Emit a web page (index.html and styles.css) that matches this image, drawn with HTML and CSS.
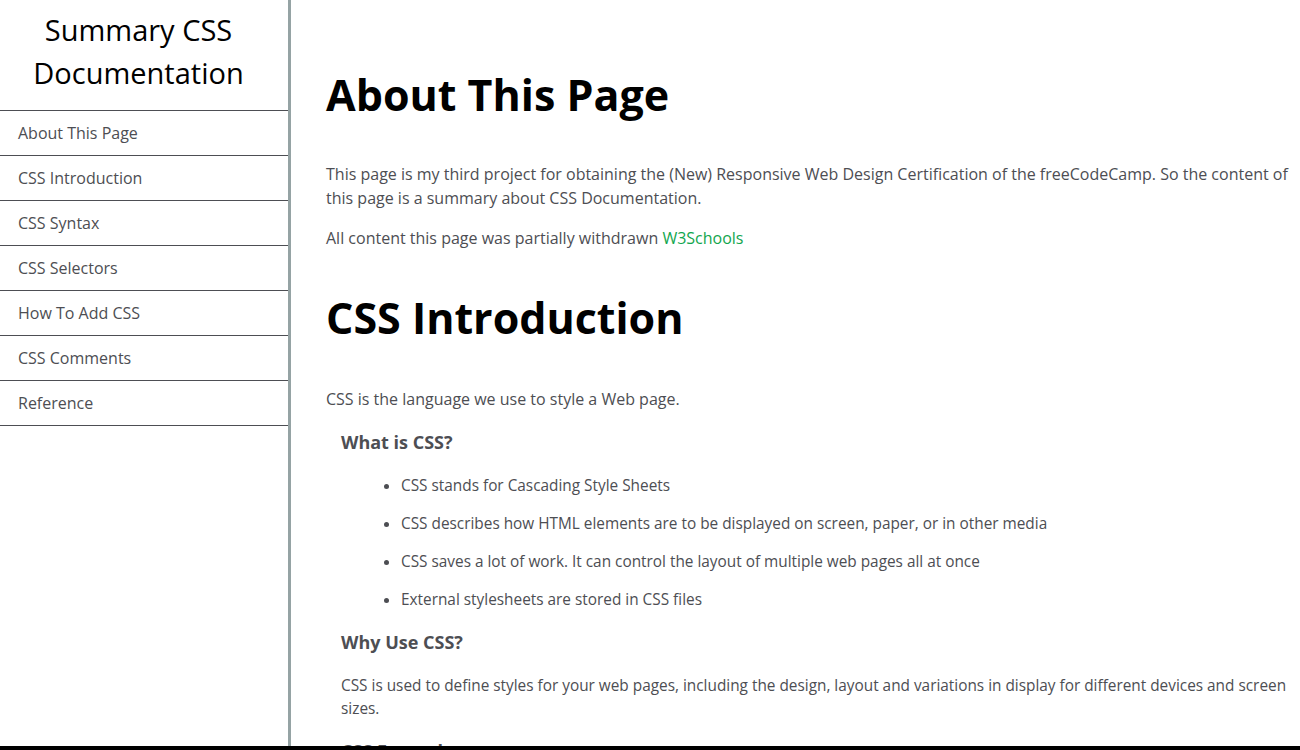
FILE: index.html
```html
<!DOCTYPE html>
<html lang="en">
<head>
<meta charset="utf-8">
<title>Summary CSS Documentation</title>
<link rel="stylesheet" href="styles.css">
</head>
<body>
<nav id="navbar" class="navbar">
  <header class="nav-title">Summary CSS Documentation</header>
  <ul class="nav-list">
    <li><a class="nav-link" href="#About_This_Page">About This Page</a></li>
    <li><a class="nav-link" href="#CSS_Introduction">CSS Introduction</a></li>
    <li><a class="nav-link" href="#CSS_Syntax">CSS Syntax</a></li>
    <li><a class="nav-link" href="#CSS_Selectors">CSS Selectors</a></li>
    <li><a class="nav-link" href="#How_To_Add_CSS">How To Add CSS</a></li>
    <li><a class="nav-link" href="#CSS_Comments">CSS Comments</a></li>
    <li><a class="nav-link" href="#Reference">Reference</a></li>
  </ul>
</nav>
<main id="main-doc" class="main-doc">
  <section class="main-section" id="About_This_Page">
    <header class="section-title">About This Page</header>
    <p class="text">This page is my third project for obtaining the (New) Responsive Web Design Certification of the freeCodeCamp. So the content of this page is a summary about CSS Documentation.</p>
    <p class="text">All content this page was partially withdrawn <a class="green-link" href="#">W3Schools</a></p>
  </section>
  <section class="main-section" id="CSS_Introduction">
    <header class="section-title">CSS Introduction</header>
    <p class="text intro">CSS is the language we use to style a Web page.</p>
    <article class="sub">
      <h3 class="sub-title">What is CSS?</h3>
      <ul class="bullets">
        <li>CSS stands for Cascading Style Sheets</li>
        <li>CSS describes how HTML elements are to be displayed on screen, paper, or in other media</li>
        <li>CSS saves a lot of work. It can control the layout of multiple web pages all at once</li>
        <li>External stylesheets are stored in CSS files</li>
      </ul>
      <h3 class="sub-title">Why Use CSS?</h3>
      <p class="sub-text">CSS is used to define styles for your web pages, including the design, layout and variations in display for different devices and screen sizes.</p>
      <h3 class="sub-title">CSS Example</h3>
      <p class="sub-text">body { background-color: lightblue; }</p>
    </article>
  </section>
</main>
<div class="bottom-bar"></div>
</body>
</html>
```
FILE: styles.css
```css
html, body {
  margin: 0;
  padding: 0;
  background: #fff;
}
body {
  font-family: "Open Sans", "Liberation Sans", sans-serif;
  color: #4d4e53;
  overflow: hidden;
  height: 750px;
}
.navbar {
  position: fixed;
  top: 0;
  left: 0;
  width: 288px;
  height: 100%;
  border-right: 3px solid #95a3a4;
  background: #fff;
  z-index: 2;
}
.nav-title {
  color: #000;
  font-size: 29px;
  line-height: 43px;
  text-align: center;
  padding: 8px 21px 16px 10px;
  border-bottom: 1px solid #4d4e53;
}
.nav-list {
  list-style: none;
  margin: 0;
  padding: 0;
}
.nav-list li {
  border-bottom: 1px solid #4d4e53;
}
.nav-link {
  display: block;
  padding: 10px 18px;
  font-size: 16px;
  line-height: 24px;
  color: #4d4e53;
  text-decoration: none;
}
.main-doc {
  margin-left: 291px;
  padding: 62px 10px 0 35px;
}
.section-title {
  color: #000;
  font-weight: 700;
  font-size: 43px;
  line-height: 65px;
  margin: 35px 0 35px;
}
.main-section:first-child .section-title {
  margin-top: 0;
}
.text {
  font-size: 16px;
  line-height: 24px;
  margin: 16px 0;
}
.text.intro {
  margin-top: 37px;
}
.green-link {
  color: #12a64e;
  text-decoration: none;
}
.sub {
  padding-left: 15px;
}
.sub-title {
  font-size: 18px;
  font-weight: 700;
  line-height: 25px;
  margin: 19px 0;
}
.bullets {
  margin: 19px 0;
  padding-left: 60px;
}
.bullets li {
  font-size: 15.36px;
  line-height: 23px;
  margin: 15px 0;
}
.sub-text {
  font-size: 15.36px;
  line-height: 23px;
  margin: 19px 0;
}
.bottom-bar {
  position: fixed;
  left: 0;
  right: 0;
  bottom: 0;
  height: 4px;
  background: #000;
  z-index: 3;
}
```
